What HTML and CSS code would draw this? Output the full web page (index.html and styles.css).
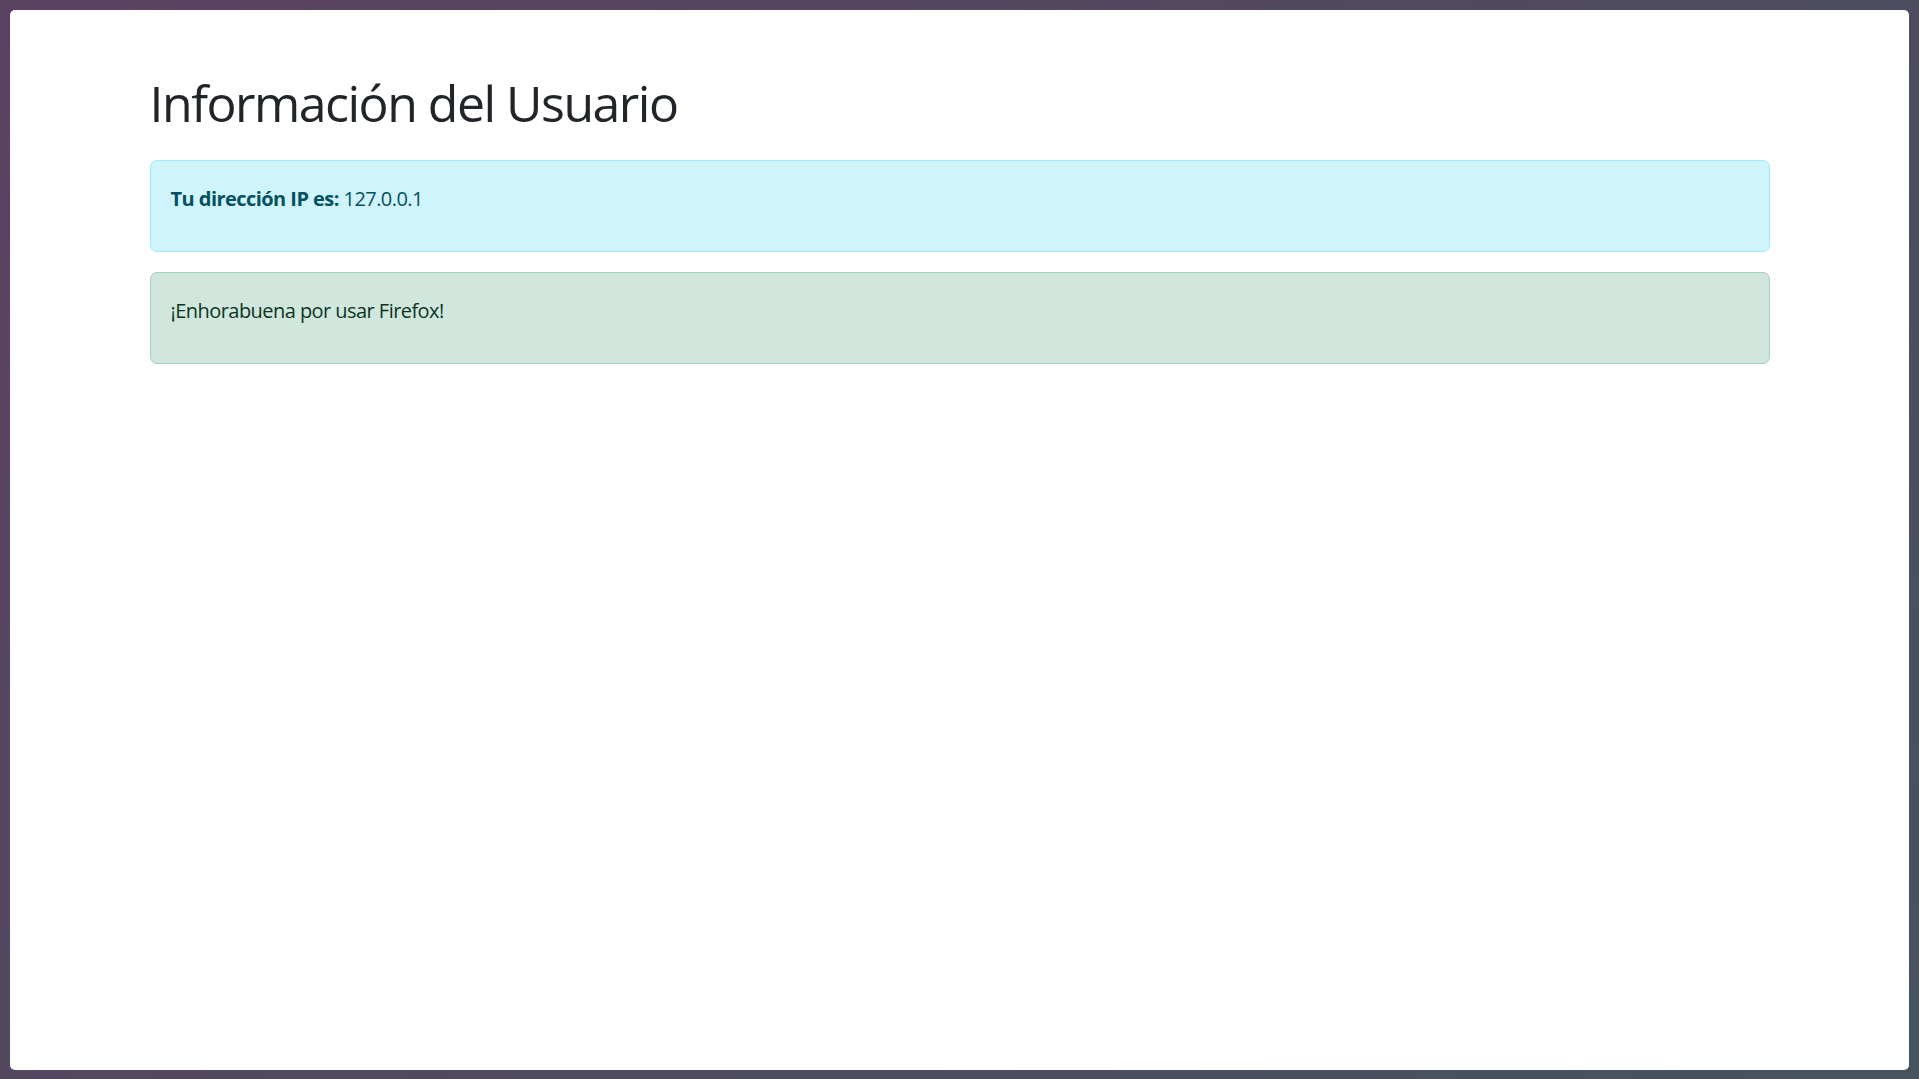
FILE: index.html
```html
<!DOCTYPE html>
<html lang="es">
<head>
<meta charset="utf-8">
<title>Información del Usuario</title>
<link rel="stylesheet" href="styles.css">
</head>
<body>
<div class="window">
  <div class="container">
    <h1 class="title">Información del Usuario</h1>
    <div class="alert alert-info">
      <p><strong>Tu dirección IP es:</strong> 127.0.0.1</p>
    </div>
    <div class="alert alert-success">
      <p>¡Enhorabuena por usar Firefox!</p>
    </div>
  </div>
</div>
</body>
</html>
```

FILE: styles.css
```css
html, body {
  margin: 0;
  height: 100%;
}
body {
  box-sizing: border-box;
  padding: 10px 10px 9px 10px;
  background: linear-gradient(135deg, #5c4262 0%, #504a60 50%, #46535d 100%);
  font-family: "Open Sans", "Noto Sans", sans-serif;
  color: #212529;
}
.window {
  height: 100%;
  background: #ffffff;
  border-radius: 5px;
  overflow: hidden;
}
.container {
  width: 1620px;
  margin: 0 auto;
  padding-top: 63px;
}
.title {
  margin: 0 0 27px 0;
  font-size: 50px;
  font-weight: 400;
  line-height: 60px;
  letter-spacing: -1.5px;
  color: #212529;
}
.alert {
  border: 1px solid transparent;
  border-radius: 7px;
  padding: 23px 20px 17px 20px;
  margin-bottom: 20px;
  font-size: 20px;
  line-height: 30px;
  letter-spacing: -0.55px;
}
.alert p {
  margin: 0 0 20px 0;
}
.alert-info {
  background: #cff4fc;
  border-color: #9eeaf9;
  color: #055160;
}
.alert-info strong {
  font-weight: 700;
}
.alert-success {
  background: #d1e7dd;
  border-color: #a3cfbb;
  color: #0a3622;
}
```
